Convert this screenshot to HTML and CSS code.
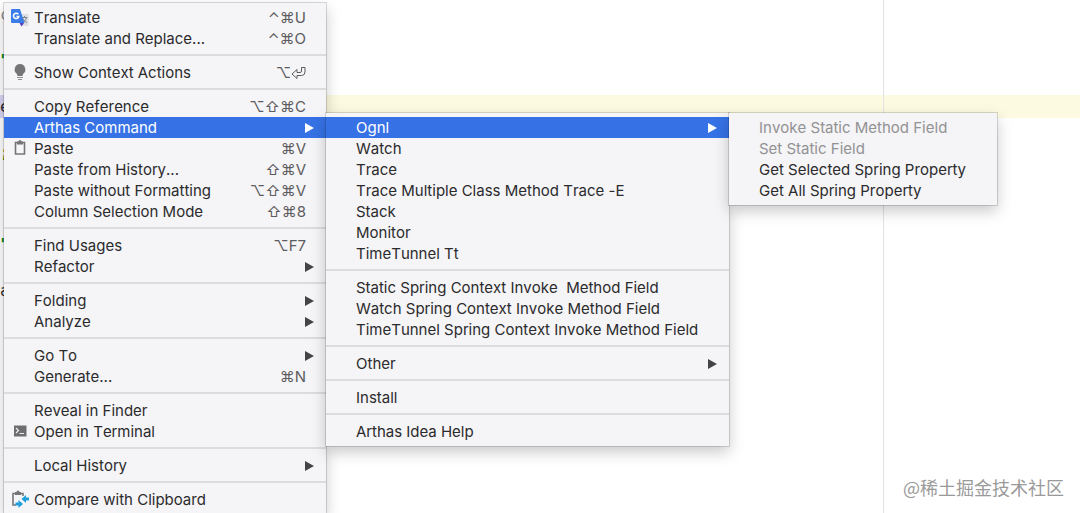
FILE: index.html
```html
<!doctype html>
<html lang="en">
<head>
  <meta charset="utf-8">
  <meta name="viewport" content="width=device-width,initial-scale=1">
  <title>Arthas Command</title>
  <link rel="stylesheet" href="styles.css">
</head>
<body>
  <main class="editor">
    <div class="line dim">c</div>
    <div class="line"></div>
    <div class="line str">"</div>
    <div class="line"></div>
    <div class="line current"><span class="sel">e</span></div>
    <div class="line"></div>
    <div class="line str">;</div>
    <div class="line"></div>
    <div class="line"></div>
    <div class="line"></div>
    <div class="line str">"</div>
    <div class="line"></div>
    <div class="line">a</div>
    <div class="margin-guide"></div>
    <div class="watermark">@稀土掘金技术社区</div>
  </main>

  <ul class="menu context" role="menu">
    <li>
      <button class="item" role="menuitem">
        <svg class="icon" viewBox="0 0 20 20" aria-hidden="true">
          <path d="M9 6h8.500a1 1 0 0 1 1 1v10a1 1 0 0 1-1 1H12z" fill="#dcdfe4"/>
          <path d="M11.500 9.500h6M14.500 8v1.500M16.500 9.500c-.5 2.500-2 4-4 5M13 10.500c.7 2 2 3.200 4 4" fill="none" stroke="#80868e"/>
          <path d="M9.500 15h4.500l-2.500 3.500z" fill="#5b3fc0"/>
          <path d="M2 1h8l4.500 14H2a1 1 0 0 1-1-1V2a1 1 0 0 1 1-1z" fill="#3b7de8"/>
          <path d="M8.300 6.200a2.700 2.700 0 1 0 .5 2.300H6.500" fill="none" stroke="#fff" stroke-width="1.500"/>
        </svg>
        <span class="label">Translate</span><kbd>⌃⌘U</kbd>
      </button>
    </li>
    <li><button class="item" role="menuitem"><span class="label">Translate and Replace...</span><kbd>⌃⌘O</kbd></button></li>
    <li class="sep" role="separator"></li>
    <li>
      <button class="item" role="menuitem">
        <svg class="icon" viewBox="0 0 20 20" aria-hidden="true">
          <path d="M10 1a5.500 5.500 0 0 0-3 10l.5 2h5l.5-2a5.500 5.500 0 0 0-3-10z" fill="#757577"/>
          <path d="M7 14.500h6M8 16.500h4" stroke="#8d8d8f" stroke-width="1.200"/>
        </svg>
        <span class="label">Show Context Actions</span>
        <kbd>⌥<svg class="return" viewBox="0 0 15 14" role="img" aria-label="Return"><path d="M10.500 1.500h3.500V6q0 3.500-3.500 3.500H6V12.500L1 8l5-4.500v3h3q1.500 0 1.500-1.500z" fill="none" stroke="currentColor"/></svg></kbd>
      </button>
    </li>
    <li class="sep" role="separator"></li>
    <li><button class="item" role="menuitem"><span class="label">Copy Reference</span><kbd>⌥⇧⌘C</kbd></button></li>
    <li class="has-sub">
      <button class="item active" role="menuitem" aria-haspopup="true" aria-expanded="true"><span class="label">Arthas Command</span><span class="arrow"></span></button>
      <ul class="menu sub commands" role="menu">
        <li class="has-sub">
          <button class="item active" role="menuitem" aria-haspopup="true" aria-expanded="true"><span class="label">Ognl</span><span class="arrow"></span></button>
          <ul class="menu sub ognl" role="menu">
            <li><button class="item" role="menuitem" disabled><span class="label">Invoke Static Method Field</span></button></li>
            <li><button class="item" role="menuitem" disabled><span class="label">Set Static Field</span></button></li>
            <li><button class="item" role="menuitem"><span class="label">Get Selected Spring Property</span></button></li>
            <li><button class="item" role="menuitem"><span class="label">Get All Spring Property</span></button></li>
          </ul>
        </li>
        <li><button class="item" role="menuitem"><span class="label">Watch</span></button></li>
        <li><button class="item" role="menuitem"><span class="label">Trace</span></button></li>
        <li><button class="item" role="menuitem"><span class="label">Trace Multiple Class Method Trace -E</span></button></li>
        <li><button class="item" role="menuitem"><span class="label">Stack</span></button></li>
        <li><button class="item" role="menuitem"><span class="label">Monitor</span></button></li>
        <li><button class="item" role="menuitem"><span class="label">TimeTunnel Tt</span></button></li>
        <li class="sep" role="separator"></li>
        <li><button class="item" role="menuitem"><span class="label">Static Spring Context Invoke  Method Field</span></button></li>
        <li><button class="item" role="menuitem"><span class="label">Watch Spring Context Invoke Method Field</span></button></li>
        <li><button class="item" role="menuitem"><span class="label">TimeTunnel Spring Context Invoke Method Field</span></button></li>
        <li class="sep" role="separator"></li>
        <li><button class="item" role="menuitem" aria-haspopup="true"><span class="label">Other</span><span class="arrow"></span></button></li>
        <li class="sep" role="separator"></li>
        <li><button class="item" role="menuitem"><span class="label">Install</span></button></li>
        <li class="sep" role="separator"></li>
        <li><button class="item" role="menuitem"><span class="label">Arthas Idea Help</span></button></li>
      </ul>
    </li>
    <li>
      <button class="item" role="menuitem">
        <svg class="icon" viewBox="0 0 20 20" aria-hidden="true">
          <path d="M5.500 3.500h9v11.500h-9z" fill="none" stroke="#757577" stroke-width="1.600"/>
          <path d="M7 2.500h1.500a1.500 1.500 0 0 1 3 0H13v3H7z" fill="#757577"/>
        </svg>
        <span class="label">Paste</span><kbd>⌘V</kbd>
      </button>
    </li>
    <li><button class="item" role="menuitem"><span class="label">Paste from History...</span><kbd>⇧⌘V</kbd></button></li>
    <li><button class="item" role="menuitem"><span class="label">Paste without Formatting</span><kbd>⌥⇧⌘V</kbd></button></li>
    <li><button class="item" role="menuitem"><span class="label">Column Selection Mode</span><kbd>⇧⌘8</kbd></button></li>
    <li class="sep" role="separator"></li>
    <li><button class="item" role="menuitem"><span class="label">Find Usages</span><kbd>⌥F7</kbd></button></li>
    <li><button class="item" role="menuitem" aria-haspopup="true"><span class="label">Refactor</span><span class="arrow"></span></button></li>
    <li class="sep" role="separator"></li>
    <li><button class="item" role="menuitem" aria-haspopup="true"><span class="label">Folding</span><span class="arrow"></span></button></li>
    <li><button class="item" role="menuitem" aria-haspopup="true"><span class="label">Analyze</span><span class="arrow"></span></button></li>
    <li class="sep" role="separator"></li>
    <li><button class="item" role="menuitem" aria-haspopup="true"><span class="label">Go To</span><span class="arrow"></span></button></li>
    <li><button class="item" role="menuitem"><span class="label">Generate...</span><kbd>⌘N</kbd></button></li>
    <li class="sep" role="separator"></li>
    <li><button class="item" role="menuitem"><span class="label">Reveal in Finder</span></button></li>
    <li>
      <button class="item" role="menuitem">
        <svg class="icon" viewBox="0 0 20 20" aria-hidden="true">
          <path d="M4 3.500h12.500v11H4z" fill="#6e6e70"/>
          <path d="M6 6l2.500 2.500L6 11M9.500 11.500H14" fill="none" stroke="#f0f0f0" stroke-width="1.200"/>
        </svg>
        <span class="label">Open in Terminal</span>
      </button>
    </li>
    <li class="sep" role="separator"></li>
    <li><button class="item" role="menuitem" aria-haspopup="true"><span class="label">Local History</span><span class="arrow"></span></button></li>
    <li class="sep" role="separator"></li>
    <li>
      <button class="item" role="menuitem">
        <svg class="icon" viewBox="0 0 20 20" aria-hidden="true">
          <path d="M6 15H3V3.500h10V6" fill="none" stroke="#757577" stroke-width="1.600"/>
          <path d="M5 2h1.500a1.500 1.500 0 0 1 3 0H11v3H5z" fill="#757577"/>
          <path d="M19 7.500h-3V5L11.500 9l4.500 4v-2.500h3zM5.500 12.500h3V10l4.500 4-4.500 4v-2.500h-3z" fill="#1f9fdc"/>
        </svg>
        <span class="label">Compare with Clipboard</span>
      </button>
    </li>
  </ul>
</body>
</html>
```
FILE: styles.css
```css
:root{
  --menu:#f5f4f6;
  --text:#2b2b2d;
  --muted:#5c5c5f;
  --disabled:#929294;
  --line:#dcdcde;
  --accent:#3672e5;
}
*{box-sizing:border-box}
html,body{height:100%;margin:0}
body{position:relative;overflow:hidden;background:#fff;color:var(--text);font-family:Inter,"Noto Sans",sans-serif;font-size:15px;font-kerning:none;font-variant-ligatures:none}

/* editor behind the menus */
.editor{height:100%;padding-top:3px;font-family:"DejaVu Sans Mono",monospace;font-size:16px}
.line{height:23px;line-height:23px}
.line.current{background:#fcfae0}
.dim{color:#8c8c8c}
.str{color:#158a1b;font-weight:700}
.sel{display:inline-block;background:#d9d5f5}
.margin-guide{position:absolute;top:0;bottom:0;right:196px;width:1px;background:#e2e2e4}
.watermark{position:absolute;right:16px;bottom:14px;color:#9a9a9a;font-family:"Noto Sans CJK SC",sans-serif;font-size:18px;line-height:24px}

/* menus */
.menu{position:absolute;margin:0;padding:4px 0;list-style:none;background:var(--menu);box-shadow:0 0 0 1px rgba(0,0,0,.14),0 6px 14px rgba(0,0,0,.22)}
.context{left:4px;top:3px;width:322px}
.has-sub{position:relative}
.sub{left:100%;top:-4px;z-index:1}
.commands{width:403px}
.ognl{width:268px}

.item{display:flex;align-items:center;width:100%;height:21px;padding:0 12px 0 30px;border:0;background:none;color:inherit;font:inherit;font-kerning:inherit;font-variant-ligatures:inherit;line-height:20px;text-align:left;white-space:pre}
.item:disabled{color:var(--disabled)}
.item.active{background:var(--accent);color:#fff}
.label{flex:1}
.icon{flex:none;width:20px;height:20px;margin-left:-24px;margin-right:4px}
kbd{display:flex;align-items:center;margin-right:8px;color:var(--muted);font:inherit}
.return{width:15px;height:14px}
.arrow{border-left:9px solid #444446;border-top:5px solid transparent;border-bottom:5px solid transparent}
.active .arrow{border-left-color:#fff}
.sep{height:2px;margin:5px 0 6px;background:var(--line)}
```
